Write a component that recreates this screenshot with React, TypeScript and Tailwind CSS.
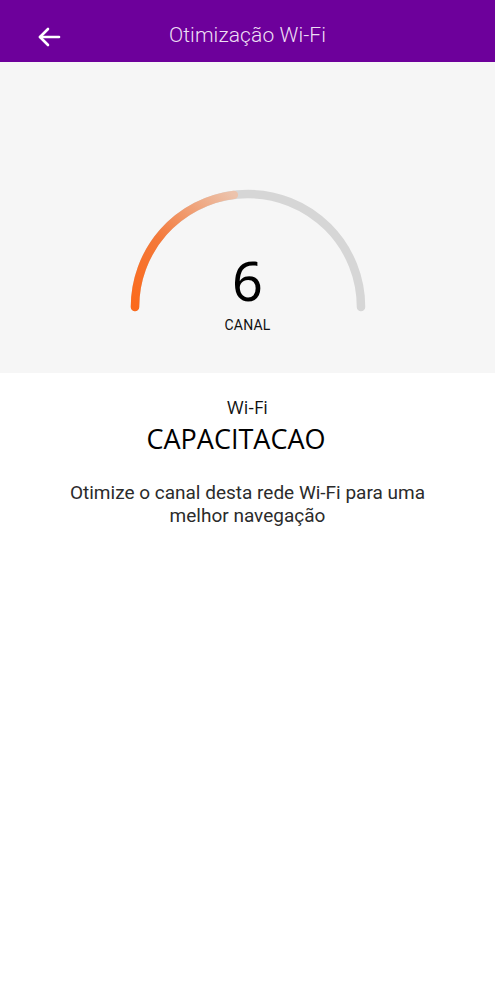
import React from 'react';

const cx = 120;
const cy = 118;
const r = 113;
// orange part runs from left end up to just before the top
const progress = 0.46;

const Gauge: React.FC<{ value: number; label: string }> = ({ value, label }) => {
  const a = Math.PI * (1 - progress);
  const ex = cx + r * Math.cos(a);
  const ey = cy - r * Math.sin(a);
  return (
    <div className="relative h-[126px] w-[240px]">
      <svg width="240" height="126" viewBox="0 0 240 126">
        <defs>
          <linearGradient id="g" x1={cx - r} y1={cy} x2={ex} y2={ey} gradientUnits="userSpaceOnUse">
            <stop offset="0" stopColor="#fb6a1c" />
            <stop offset="0.45" stopColor="#f4793a" />
            <stop offset="1" stopColor="#ecc3ac" />
          </linearGradient>
        </defs>
        <path
          d={`M ${cx - r} ${cy} A ${r} ${r} 0 0 1 ${cx + r} ${cy}`}
          fill="none"
          stroke="#d6d6d6"
          strokeWidth="8.5"
          strokeLinecap="round"
        />
        <path
          d={`M ${cx - r} ${cy} A ${r} ${r} 0 0 1 ${ex} ${ey}`}
          fill="none"
          stroke="url(#g)"
          strokeWidth="8.5"
          strokeLinecap="round"
        />
      </svg>
      <div className="absolute left-0 right-0 top-[64px] flex flex-col items-center">
        <span className="text-[54px] leading-none text-black" style={{ fontFamily: '"Noto Sans", sans-serif' }}>{value}</span>
        <span className="mt-[11px] text-[14px] leading-none tracking-[0.2px] text-[#111]" style={{ fontFamily: 'Roboto, sans-serif' }}>{label}</span>
      </div>
    </div>
  );
};

export default function App() {
  return (
    <div className="min-h-[1000px] w-[495px] bg-white" style={{ fontFamily: 'Roboto, sans-serif' }}>
      <header className="relative flex h-[62px] items-center justify-center bg-[#6d009b]">
        <button className="absolute left-[36px] top-[25px] text-white">
          <svg width="26" height="24" viewBox="0 0 26 24" fill="none" stroke="white" strokeWidth="2.6" strokeLinecap="round" strokeLinejoin="round">
            <path d="M23 12H4" />
            <path d="M12 4l-8 8 8 8" />
          </svg>
        </button>
        <h1 className="mt-[10px] text-[21px] font-light tracking-[0.1px] text-[#eddff4]">Otimização Wi-Fi</h1>
      </header>

      <section className="flex h-[311px] justify-center bg-[#f6f6f6] pt-[127px]">
        <Gauge value={6} label="CANAL" />
      </section>

      <section className="flex flex-col items-center pt-[22px] text-center">
        <p className="text-[18px] leading-[24px] text-[#111]" style={{ fontFamily: '"Open Sans", sans-serif' }}>Wi-Fi</p>
        <p className="mt-[3px] pr-[23px] text-[27px] leading-[34px] text-black" style={{ fontFamily: '"Open Sans", sans-serif' }}>CAPACITACAO</p>
        <p className="mt-[25px] w-[390px] text-[19px] leading-[23px] text-[#2b2b2b]">
          Otimize o canal desta rede Wi-Fi para uma melhor navegação
        </p>
      </section>
    </div>
  );
}
